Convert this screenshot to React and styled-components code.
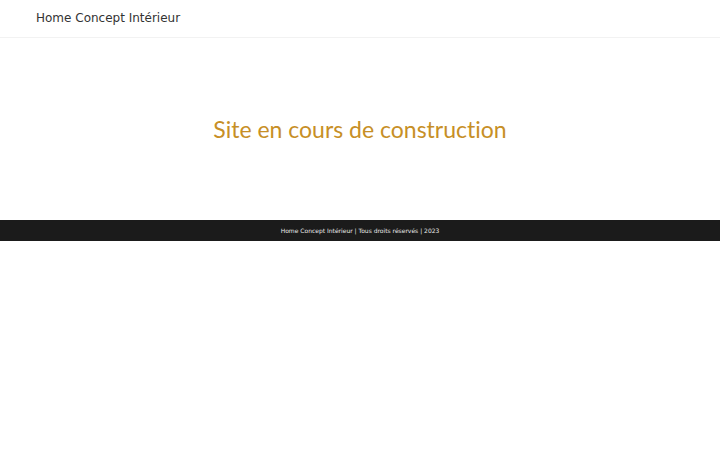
import React from 'react';
import styled, { createGlobalStyle } from 'styled-components';

const GlobalStyle = createGlobalStyle`
  html, body {
    margin: 0;
    padding: 0;
    background: #fff;
  }
  body {
    font-family: "DejaVu Sans", sans-serif;
  }
`;

const Header = styled.header`
  height: 37px;
  display: flex;
  align-items: center;
  padding: 0 36px;
  border-bottom: 1px solid #f2f2f2;
`;

const Brand = styled.div`
  font-family: "DejaVu Sans", sans-serif;
  font-size: 12px;
  color: #333;
  margin-top: -2px;
`;

const Hero = styled.main`
  height: 182px;
  display: flex;
  align-items: center;
  justify-content: center;
`;

const Title = styled.h1`
  margin: 0;
  font-family: "Lato", "Open Sans", sans-serif;
  font-weight: 400;
  font-size: 23px;
  color: #c78f26;
  font-variant-ligatures: none;
`;

const Footer = styled.footer`
  height: 21px;
  background: #1b1b1b;
  display: flex;
  align-items: center;
  justify-content: center;
`;

const FooterText = styled.span`
  font-family: "DejaVu Sans", sans-serif;
  font-size: 6px;
  color: #e8e8e8;
`;

export default function App() {
  return (
    <>
      <GlobalStyle />
      <Header>
        <Brand>Home Concept Intérieur</Brand>
      </Header>
      <Hero>
        <Title>Site en cours de construction</Title>
      </Hero>
      <Footer>
        <FooterText>Home Concept Intérieur | Tous droits réservés | 2023</FooterText>
      </Footer>
    </>
  );
}
